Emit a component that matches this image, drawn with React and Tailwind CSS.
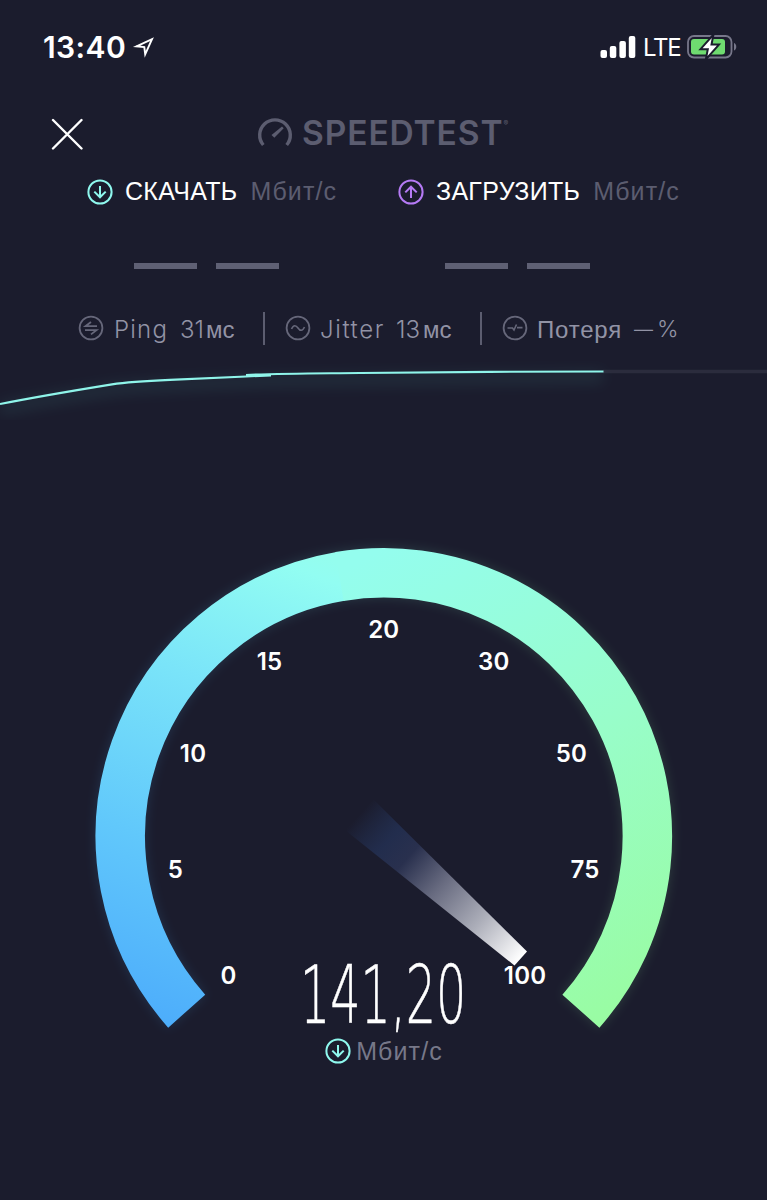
const TICKS = [
  { label: "0", x: 228.5, y: 984 },
  { label: "5", x: 175.5, y: 878 },
  { label: "10", x: 193, y: 762 },
  { label: "15", x: 269.5, y: 670 },
  { label: "20", x: 383.8, y: 638 },
  { label: "30", x: 493.8, y: 670 },
  { label: "50", x: 571.5, y: 762 },
  { label: "75", x: 585, y: 878 },
  { label: "100", x: 525, y: 984 },
];

function ArrowCircle({ up, color }) {
  return (
    <svg width="26" height="26" viewBox="0 0 26 26" fill="none" stroke={color} strokeWidth="2">
      <circle cx="13" cy="13" r="11.6" />
      <path
        d={up ? "M13 19V8M7.3 13.4L13 7.7l5.7 5.7" : "M13 7v11M7.3 12.6l5.7 5.7 5.7-5.7"}
        strokeWidth="2"
      />
    </svg>
  );
}

function RoundIcon({ children }) {
  return (
    <svg
      className="shrink-0"
      width="26"
      height="26"
      viewBox="0 0 26 26"
      fill="none"
      stroke="#66677a"
      strokeWidth="1.8"
    >
      <circle cx="13" cy="13" r="11.4" />
      {children}
    </svg>
  );
}

function StatusBar() {
  return (
    <div className="flex h-[94px] items-center pl-[43px] pr-[29px] text-white">
      <span className="w-[89px] text-[30px] font-semibold tracking-[0.4px]">13:40</span>
      <svg width="24" height="24" viewBox="0 0 24 24" fill="none" stroke="white" strokeWidth="1.9">
        <path d="M4.5 11.3L20 4.2 13.2 19.3 12.3 12.1Z" />
      </svg>
      <div className="ml-auto flex items-center">
        <svg width="36" height="24" viewBox="0 0 36 24" fill="white">
          <rect x="0.5" y="15" width="6.5" height="8" rx="2" />
          <rect x="9.8" y="11" width="6.5" height="12" rx="2" />
          <rect x="19.4" y="6" width="6.5" height="17" rx="2" />
          <rect x="28.8" y="1" width="6.5" height="22" rx="2" />
        </svg>
        <span className="ml-[7px] mt-[2px] w-[36px] text-[24px] tracking-[-1.3px]">LTE</span>
        <svg className="ml-[8px]" width="51" height="26" viewBox="0 0 51 26">
          <rect x="1" y="2" width="43.5" height="21.5" rx="6" fill="none" stroke="#77778a" strokeWidth="1.8" />
          <rect x="4" y="5" width="34" height="15.5" rx="3" fill="#6fdb70" />
          <path d="M47 9c3 1 3 6.5 0 7.5z" fill="#77778a" />
          <path
            d="M26.5 0.5L13.5 15.2h7.3L18.8 25.5 32 10.6h-7.5z"
            fill="white"
            stroke="#1b1c2d"
            strokeWidth="2"
          />
        </svg>
      </div>
    </div>
  );
}

function Header() {
  return (
    <header className="flex h-[80px] items-center pl-[51px]">
      <svg width="32" height="32" viewBox="0 0 32 32" stroke="white" strokeWidth="2.4" strokeLinecap="round">
        <path d="M2 2l28.5 28.5M30.5 2L2 30.5" />
      </svg>
      <svg className="mb-[4px] ml-[174px]" width="36" height="32" viewBox="0 0 36 32" fill="none" stroke="#5c5d70">
        <path d="M6.3 29A15.3 15.3 0 1 1 29.7 29" strokeWidth="3.4" />
        <path d="M14.5 19L25 10.6 26.7 12.3 17.3 21.8Z" fill="#5c5d70" stroke="none" />
      </svg>
      <span className="mb-[1px] ml-[9px] text-[33.5px] font-semibold tracking-[0.9px] text-[#5c5d70]">
        SPEEDTEST
      </span>
      <span className="mb-[20px] text-[7px] text-[#5c5d70]">®</span>
    </header>
  );
}

function Result({ up, color, title, className }) {
  return (
    <div className={className}>
      <div className="flex h-[35px] items-center font-['Liberation_Sans',sans-serif] text-[25px]">
        <ArrowCircle up={up} color={color} />
        <span className="ml-[12px] mt-px tracking-[0.3px] text-white">{title}</span>
        <span className="ml-[13px] mt-px tracking-[1.1px] text-[#5c5d70]">Мбит/с</span>
      </div>
      <div className="ml-[47px] mt-[54px] flex gap-[19px]">
        <div className="h-[6px] w-[63px] bg-[#5f6074]" />
        <div className="h-[6px] w-[63px] bg-[#5f6074]" />
      </div>
    </div>
  );
}

function Stats() {
  return (
    <div className="mt-[42px] flex h-[34px] items-center pl-[78px] text-[24px] font-light text-[#9293a5]">
      <RoundIcon>
        <path d="M19 11.2H7.5l5.5-4.2M7 15.200h11.500l-5.500 4.200" strokeWidth="1.8" />
      </RoundIcon>
      <span className="ml-[10px] mt-[3px] w-[66px] tracking-[1.2px]">Ping</span>
      <span className="mt-[3px] w-[26px]">31</span>
      <span className="mt-[3px] w-[57px] font-['Liberation_Sans',sans-serif]">мс</span>
      <div className="h-[33px] w-[2px] bg-[#5c5d70]" />
      <div className="ml-[20px] flex">
        <RoundIcon>
          <path d="M6.500 14c2-4.500 4.500-4 6.500-1s4.500 3.500 6.500-1" strokeWidth="1.6" />
        </RoundIcon>
      </div>
      <span className="ml-[9px] mt-[3px] w-[76px] tracking-[1.6px]">Jitter</span>
      <span className="mt-[3px] w-[27px]">13</span>
      <span className="mt-[3px] w-[57px] font-['Liberation_Sans',sans-serif]">мс</span>
      <div className="h-[33px] w-[2px] bg-[#5c5d70]" />
      <div className="ml-[20px] flex">
        <RoundIcon>
          <path d="M5.5 13h5l1.500 2 2.500-5.500M15 12.600h5.500" strokeWidth="1.6" />
        </RoundIcon>
      </div>
      <span className="ml-[9px] mt-[3px] w-[97px] font-['Liberation_Sans',sans-serif] tracking-[0.8px]">
        Потеря
      </span>
      <span className="mt-[5px] w-[23px] text-[19px]">—</span>
      <span className="mt-[3px] text-[23px]">%</span>
    </div>
  );
}

function SpeedChart() {
  return (
    <svg className="mt-px block" width="767" height="74" viewBox="0 346 767 74" fill="none">
      <defs>
        <filter id="lineGlow" x="-10%" y="-100%" width="120%" height="400%">
          <feGaussianBlur stdDeviation="7" />
        </filter>
      </defs>
      <path d="M603 371.5H767" stroke="#2b2c3d" strokeWidth="3.5" />
      <path
        d="M0 409C40 401 80 394 115 389Q140 386 270 381L603 377"
        stroke="#55aaa5"
        strokeWidth="12"
        opacity="0.12"
        filter="url(#lineGlow)"
      />
      <path
        d="M0 404C40 396 80 389.5 112 384.3Q130 381.5 170 379.8L246 376.5 271 375.3"
        stroke="#8ff5ea"
        strokeWidth="2.2"
      />
      <path d="M246 375C280 373.4 310 373.5 360 373L490 371.8 603.5 371.5" stroke="#8ff5ea" strokeWidth="2.2" />
    </svg>
  );
}

function Gauge() {
  const arc = "M186.7 1011.2A263.5 263.5 0 1 1 580.9 1011.2";
  return (
    <svg className="block overflow-visible" width="767" height="616" viewBox="0 420 767 616">
      <defs>
        <linearGradient id="arcFill" gradientUnits="userSpaceOnUse" x1="185" y1="1010" x2="590" y2="960">
          <stop offset="0" stopColor="#4fb1fb" />
          <stop offset="1" stopColor="#98fca6" />
        </linearGradient>
        <linearGradient id="arcLeft" gradientUnits="userSpaceOnUse" x1="150" y1="1020" x2="330" y2="560">
          <stop offset="0" stopColor="#4dadfb" />
          <stop offset="0.34" stopColor="#61c8fb" />
          <stop offset="0.68" stopColor="#7ae4f9" />
          <stop offset="0.96" stopColor="#92fdf2" />
          <stop offset="1" stopColor="#94fdee" />
        </linearGradient>
        <linearGradient id="arcRight" gradientUnits="userSpaceOnUse" x1="345" y1="570" x2="600" y2="1020">
          <stop offset="0" stopColor="#94fdee" />
          <stop offset="0.5" stopColor="#98fdca" />
          <stop offset="1" stopColor="#99fca3" />
        </linearGradient>
        <linearGradient id="needle" gradientUnits="userSpaceOnUse" x1="359" y1="815" x2="521" y2="958">
          <stop offset="0" stopColor="#243358" stopOpacity="0" />
          <stop offset="0.18" stopColor="#222d4d" />
          <stop offset="0.3" stopColor="#29304e" />
          <stop offset="0.5" stopColor="#686b80" />
          <stop offset="0.75" stopColor="#adafba" />
          <stop offset="1" stopColor="#ffffff" />
        </linearGradient>
        <filter id="arcGlow" x="-10%" y="-10%" width="120%" height="120%">
          <feGaussianBlur stdDeviation="6" />
        </filter>
      </defs>
      <path d={arc} fill="none" stroke="url(#arcFill)" strokeWidth="50" opacity="0.15" filter="url(#arcGlow)" />
      <g fill="none" strokeWidth="49.5">
        <path d="M186.7 1011.2A263.5 263.5 0 0 1 340.5 576.4" stroke="url(#arcLeft)" />
        <path d="M339.5 576.5A263.5 263.5 0 0 1 580.9 1011.2" stroke="url(#arcRight)" />
      </g>
      <path d="M345 830L373 799 527 951.5 514.5 965.5Z" fill="url(#needle)" />
      <g fill="white" fontSize="24" fontWeight="600" textAnchor="middle" letterSpacing="0.2">
        {TICKS.map((t) => (
          <text key={t.label} x={t.x} y={t.y}>
            {t.label}
          </text>
        ))}
      </g>
      <text
        transform="translate(300 1022.5) scale(0.587 1)"
        fill="white"
        stroke="white"
        strokeWidth="0.6"
        fontFamily="DejaVu Sans, sans-serif"
        fontWeight="200"
        fontSize="81"
      >
        141,20
      </text>
    </svg>
  );
}

export default function App() {
  return (
    <main className="h-[1200px] w-[767px] overflow-hidden bg-[#1b1c2d] font-[Inter,sans-serif]">
      <StatusBar />
      <Header />
      <div className="flex">
        <Result className="ml-[87px] w-[311px] shrink-0" color="#8ff8ee" title="СКАЧАТЬ" />
        <Result className="w-[311px] shrink-0" up color="#b57af5" title="ЗАГРУЗИТЬ" />
      </div>
      <Stats />
      <SpeedChart />
      <Gauge />
      <div className="flex h-[30px] items-center justify-center gap-[5px] pl-px font-['Liberation_Sans',sans-serif] text-[25px] text-[#777889]">
        <ArrowCircle color="#8ff8ee" />
        <span className="mt-[2px] tracking-[1.1px]">Мбит/с</span>
      </div>
    </main>
  );
}
